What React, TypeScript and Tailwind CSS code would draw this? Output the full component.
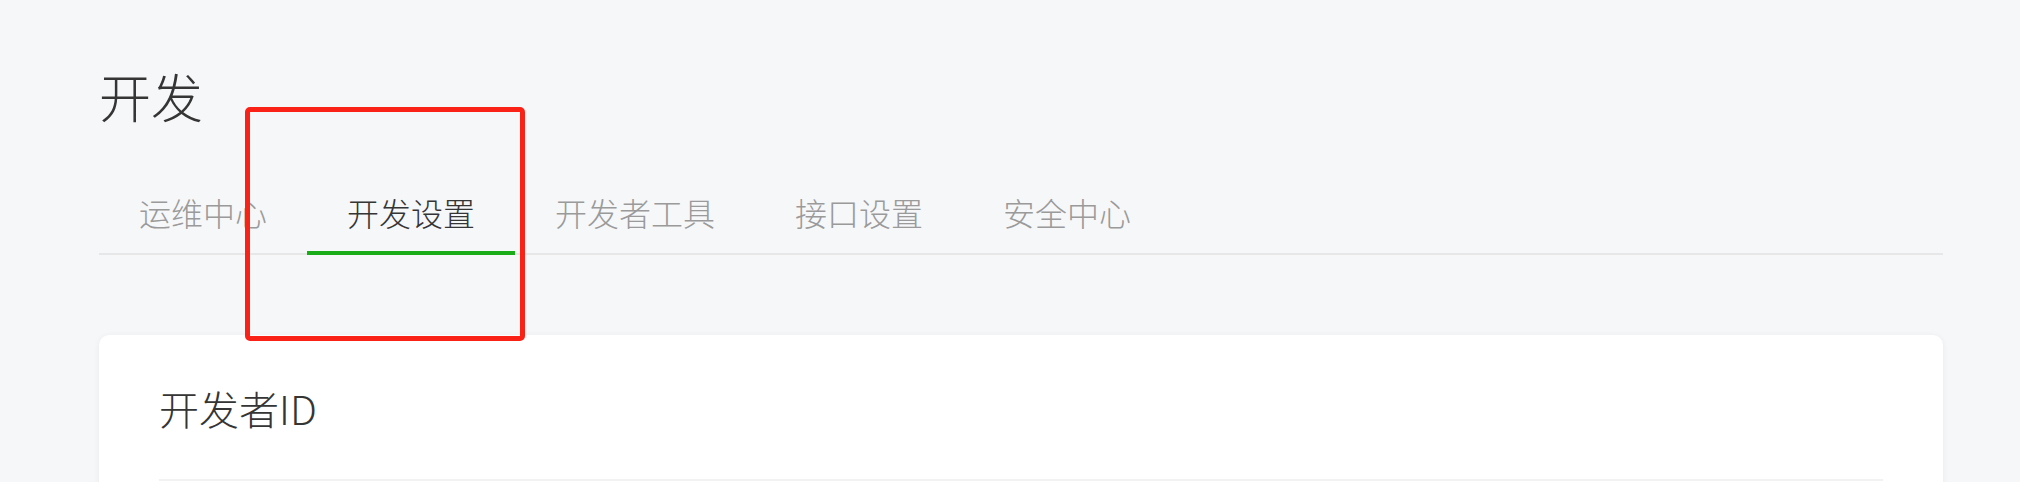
const tabs = ['运维中心', '开发设置', '开发者工具', '接口设置', '安全中心'];

export default function App() {
  const active = 1;

  return (
    <div
      className="relative h-[482px] w-full overflow-hidden bg-[#f6f7f9] font-light"
      style={{ fontFamily: '"Noto Sans CJK SC", "Noto Sans", sans-serif' }}
    >
      <div className="ml-[99px] mr-[77px]">
        <h1 className="pt-[60px] text-[52px] leading-[72px] text-[#353535]">开发</h1>

        <div className="mt-[58px] flex border-b-2 border-[#e7e7e7]">
          {tabs.map((tab, index) => (
            <div
              key={tab}
              className={
                index === active
                  ? 'relative px-[40px] pb-[19px] text-[32px] leading-[44px] text-[#353535]'
                  : 'relative px-[40px] pb-[19px] text-[32px] leading-[44px] text-[#9a9a9a]'
              }
            >
              {tab}
              {index === active && (
                <div className="absolute bottom-[-2px] left-0 right-0 h-[4px] bg-[#1aad19]" />
              )}
            </div>
          ))}
        </div>

        <div className="mt-[80px] rounded-[10px] bg-white px-[60px] pt-[45px] shadow-[0_1px_6px_rgba(0,0,0,0.06)]">
          <h2 className="text-[40px] leading-[56px] text-[#353535]">开发者ID</h2>
          <div className="mt-[43px] h-[2px] bg-[#f2f2f2]" />
          <div className="h-[40px]" />
        </div>
      </div>

      {/* annotation box */}
      <div className="absolute left-[245px] top-[107px] h-[234px] w-[280px] rounded-[5px] border-[5px] border-[#fa2116]" />
    </div>
  );
}
